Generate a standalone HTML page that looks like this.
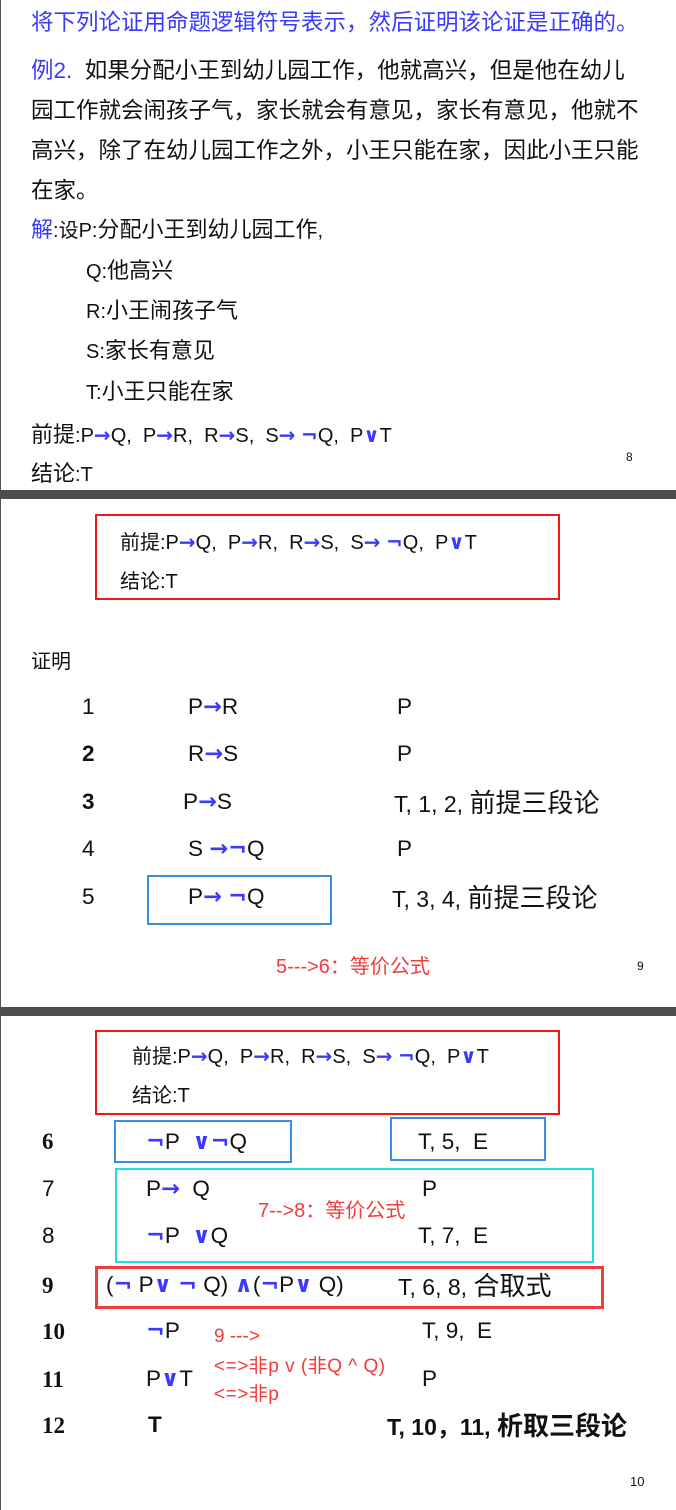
<!DOCTYPE html>
<html><head><meta charset="utf-8"><style>
body{margin:0;width:676px;height:1510px;position:relative;background:#fff;overflow:hidden;font-family:"Liberation Sans","Noto Sans CJK SC",sans-serif;color:#111}
.t{position:absolute;white-space:nowrap;line-height:1}
.b{color:#3a3aff}
.s{color:#3a3aff;font-family:"DejaVu Sans",sans-serif;font-weight:bold}
.r{color:#f03c3c}
.sep{position:absolute;left:0;width:676px;background:#4b4d4f}
.box{position:absolute;box-sizing:border-box}
.f22{font-size:22.5px}.f20{font-size:20px}.f23{font-size:23px}
.c{font-size:22px}
.n{font-family:"Liberation Serif",serif;font-weight:bold;font-size:23px}
</style></head><body>
<div style="position:absolute;left:0;top:0;width:1px;height:1510px;background:#555"></div>
<div class="t f22 b" style="left:31px;top:12px">将下列论证用命题逻辑符号表示，然后证明该论证是正确的。</div>
<div class="t f22" style="left:31px;top:60px"><span class="b">例2.</span>&nbsp; 如果分配小王到幼儿园工作，他就高兴，但是他在幼儿</div>
<div class="t f22" style="left:31px;top:100px">园工作就会闹孩子气，家长就会有意见，家长有意见，他就不</div>
<div class="t f22" style="left:31px;top:140px">高兴，除了在幼儿园工作之外，小王只能在家，因此小王只能</div>
<div class="t f22" style="left:31px;top:180px">在家。</div>
<div class="t f20" style="left:31px;top:219px"><span class="b c">解</span>:设P:<span class="c">分配小王到幼儿园工作</span>,</div>
<div class="t f20" style="left:86px;top:260px">Q:<span class="c">他高兴</span></div>
<div class="t f20" style="left:86px;top:300px">R:<span class="c">小王闹孩子气</span></div>
<div class="t f20" style="left:86px;top:340px">S:<span class="c">家长有意见</span></div>
<div class="t f20" style="left:86px;top:381px">T:<span class="c">小王只能在家</span></div>
<div class="t f20" style="left:31px;top:424px"><span class="c">前提</span>:P<span class="s">→</span>Q,&nbsp; P<span class="s">→</span>R,&nbsp; R<span class="s">→</span>S,&nbsp; S<span class="s">→</span> <span class="s">¬</span>Q,&nbsp; P<span class="s">∨</span>T</div>
<div class="t" style="left:626px;top:451px;font-size:12px">8</div>
<div class="t f20" style="left:31px;top:463px"><span class="c">结论</span>:T</div>

<div class="sep" style="top:490px;height:9px"></div>

<div class="box" style="left:95px;top:514px;width:465px;height:86px;border:2px solid #f01818"></div>
<div class="t f20" style="left:120px;top:532px">前提:P<span class="s">→</span>Q,&nbsp; P<span class="s">→</span>R,&nbsp; R<span class="s">→</span>S,&nbsp; S<span class="s">→</span> <span class="s">¬</span>Q,&nbsp; P<span class="s">∨</span>T</div>
<div class="t f20" style="left:120px;top:572px">结论:T</div>
<div class="t f20" style="left:31px;top:652px">证明</div>
<div class="t f22" style="left:82px;top:696px">1</div><div class="t f22" style="left:188px;top:696px">P<span class="s">→</span>R</div><div class="t f22" style="left:397px;top:696px">P</div>
<div class="t f22" style="left:82px;top:743px;font-weight:bold">2</div><div class="t f22" style="left:188px;top:743px">R<span class="s">→</span>S</div><div class="t f22" style="left:397px;top:743px">P</div>
<div class="t f22" style="left:82px;top:791px;font-weight:bold">3</div><div class="t f22" style="left:183px;top:791px">P<span class="s">→</span>S</div><div class="t f23" style="left:394px;top:790px">T, 1, 2, <span style="font-size:26px">前提三段论</span></div>
<div class="t f22" style="left:82px;top:838px">4</div><div class="t f22" style="left:188px;top:838px">S <span class="s">→¬</span>Q</div><div class="t f22" style="left:397px;top:838px">P</div>
<div class="box" style="left:147px;top:875px;width:185px;height:50px;border:2px solid #3a8ee6"></div>
<div class="t f22" style="left:82px;top:886px">5</div><div class="t f22" style="left:188px;top:886px">P<span class="s">→</span> <span class="s">¬</span>Q</div><div class="t f23" style="left:392px;top:885px">T, 3, 4, <span style="font-size:26px">前提三段论</span></div>
<div class="t r" style="left:276px;top:957px;font-size:20px">5---&gt;6：等价公式</div>
<div class="t" style="left:637px;top:960px;font-size:12px">9</div>

<div class="sep" style="top:1007px;height:9px"></div>

<div class="box" style="left:95px;top:1030px;width:465px;height:85px;border:2px solid #f01818"></div>
<div class="t f20" style="left:132px;top:1046px">前提:P<span class="s">→</span>Q,&nbsp; P<span class="s">→</span>R,&nbsp; R<span class="s">→</span>S,&nbsp; S<span class="s">→</span> <span class="s">¬</span>Q,&nbsp; P<span class="s">∨</span>T</div>
<div class="t f20" style="left:132px;top:1086px">结论:T</div>
<div class="box" style="left:114px;top:1120px;width:178px;height:43px;border:2px solid #3a8ee6"></div>
<div class="box" style="left:390px;top:1117px;width:156px;height:44px;border:2px solid #3a8ee6"></div>
<div class="box" style="left:115px;top:1168px;width:479px;height:95px;border:2px solid #22dde0"></div>
<div class="box" style="left:95px;top:1266px;width:509px;height:43px;border:3px solid #f03c3c"></div>
<div class="t n" style="left:42px;top:1130px">6</div><div class="t f22" style="left:146px;top:1131px"><span class="s">¬</span>P&nbsp; <span class="s">∨¬</span>Q</div><div class="t f22" style="left:418px;top:1131px">T, 5,&nbsp; E</div>
<div class="t f22" style="left:42px;top:1178px">7</div><div class="t f22" style="left:146px;top:1178px">P<span class="s">→</span>&nbsp; Q</div><div class="t f22" style="left:422px;top:1178px">P</div>
<div class="t r" style="left:258px;top:1201px;font-size:20px">7--&gt;8：等价公式</div>
<div class="t f22" style="left:42px;top:1225px">8</div><div class="t f22" style="left:146px;top:1225px"><span class="s">¬</span>P&nbsp; <span class="s">∨</span>Q</div><div class="t f22" style="left:418px;top:1225px">T, 7,&nbsp; E</div>
<div class="t n" style="left:42px;top:1274px">9</div><div class="t f22" style="left:106px;top:1274px">(<span class="s">¬</span> P<span class="s">∨</span> <span class="s">¬</span> Q) <span class="s">∧</span>(<span class="s">¬</span>P<span class="s">∨</span> Q)</div><div class="t f23" style="left:398px;top:1273px">T, 6, 8, <span style="font-size:26px">合取式</span></div>
<div class="t n" style="left:42px;top:1320px">10</div><div class="t f22" style="left:146px;top:1320px"><span class="s">¬</span>P</div><div class="t f22" style="left:422px;top:1320px">T, 9,&nbsp; E</div>
<div class="t r" style="left:214px;top:1327px;font-size:19px">9 ---&gt;</div>
<div class="t r" style="left:214px;top:1357px;font-size:19px;letter-spacing:0.5px">&lt;=&gt;非p v (非Q ^ Q)</div>
<div class="t r" style="left:214px;top:1385px;font-size:19px;letter-spacing:0.5px">&lt;=&gt;非p</div>
<div class="t n" style="left:42px;top:1368px">11</div><div class="t f22" style="left:146px;top:1368px">P<span class="s">∨</span>T</div><div class="t f22" style="left:422px;top:1368px">P</div>
<div class="t n" style="left:42px;top:1414px">12</div><div class="t f22" style="left:148px;top:1414px;font-weight:bold">T</div><div class="t f23" style="left:387px;top:1413px;font-weight:bold">T, 10，11, <span style="font-size:26px">析取三段论</span></div>
<div class="t" style="left:630px;top:1475px;font-size:13px">10</div>
</body></html>
